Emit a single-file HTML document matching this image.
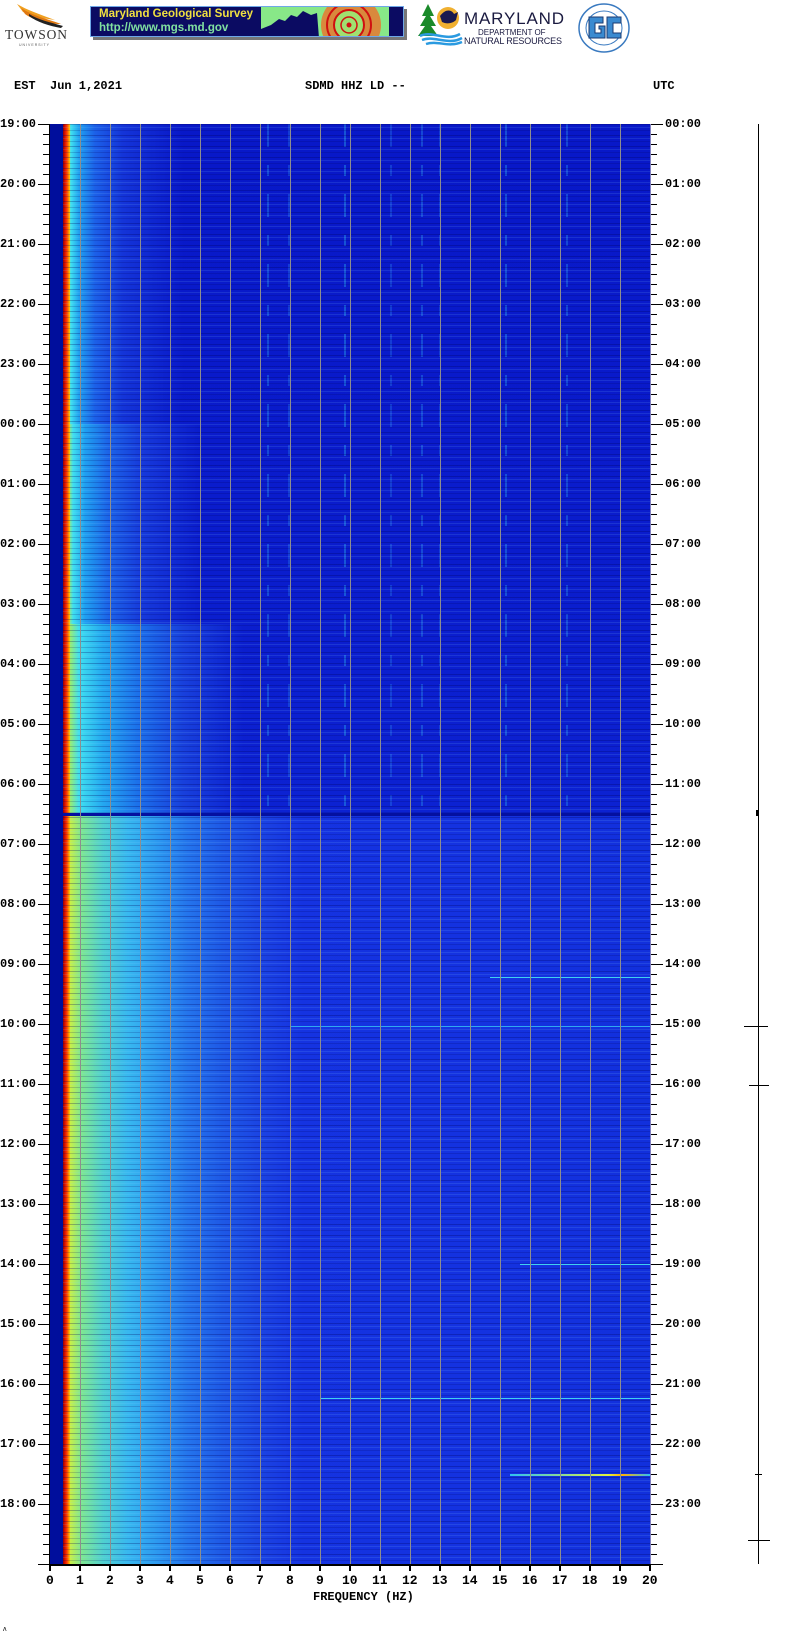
<!DOCTYPE html>
<html><head><meta charset="utf-8">
<style>
*{margin:0;padding:0;box-sizing:border-box}
body{width:802px;height:1644px;background:#fff;position:relative;overflow:hidden;font-family:"Liberation Mono",monospace}
.abs{position:absolute}
.lbl{position:absolute;font:bold 12px/12px "Liberation Mono",monospace;color:#000;letter-spacing:0}
#plot{position:absolute;left:50px;top:124px;width:600px;height:1440px;background:#0a18c8;overflow:hidden}
#plot div{position:absolute}
</style></head><body>

<svg class="abs" style="left:3px;top:2px" width="66" height="46" viewBox="0 0 66 46">
<path d="M14 2 C24 8 36 12 52 18 C38 16 28 14 20 10 Z" fill="#f0a020"/>
<path d="M18 6 C30 14 42 16 58 22 C44 22 30 18 22 12 Z" fill="#e07810"/>
<path d="M26 12 C36 18 46 20 60 24 L58 26 C46 24 34 20 26 14Z" fill="#222"/>
<text x="2" y="37" font-family="Liberation Serif,serif" font-size="13.5" fill="#333" textLength="62">TOWSON</text>
<text x="16" y="44" font-family="Liberation Sans,sans-serif" font-size="3.5" fill="#555" letter-spacing="1">UNIVERSITY</text>
</svg>

<div class="abs" style="left:93px;top:9px;width:314px;height:31px;background:#777"></div>
<div class="abs" style="left:90px;top:6px;width:314px;height:31px;background:#0b0b62;border:1px solid #6fa8e8;overflow:hidden">
 <div class="abs" style="left:8px;top:1px;font:bold 11.5px 'Liberation Sans',sans-serif;color:#f0e040">Maryland Geological Survey</div>
 <div class="abs" style="left:8px;top:15px;font:bold 11.5px 'Liberation Sans',sans-serif;color:#80e0a0">http://www.mgs.md.gov</div>
 <svg class="abs" style="left:170px;top:0" width="144" height="31" viewBox="0 0 144 31">
  <rect x="0" y="0" width="144" height="31" fill="#88e888"/>
  <path d="M0 22 L10 18 L18 12 L24 14 L30 8 L36 10 L42 4 L50 8 L56 6 L58 31 L0 31Z" fill="#0b0b62"/>
  <circle cx="90" cy="18" r="30" fill="#e87830" opacity=".85"/>
  <circle cx="88" cy="18" r="22" fill="none" stroke="#d01010" stroke-width="2"/>
  <circle cx="88" cy="18" r="15" fill="#a0e070" stroke="#d01010" stroke-width="2"/>
  <circle cx="88" cy="18" r="8" fill="none" stroke="#d01010" stroke-width="1.5"/>
  <circle cx="88" cy="18" r="2.5" fill="#d01010"/>
  <rect x="128" y="0" width="16" height="31" fill="#0b0b62"/>
 </svg>
</div>

<svg class="abs" style="left:418px;top:2px" width="150" height="44" viewBox="0 0 150 44">
<path d="M10 2 L16 14 L12 14 L18 24 L13 24 L20 34 L0 34 L7 24 L2 24 L8 14 L4 14Z" fill="#1a8a2a"/>
<circle cx="30" cy="16" r="11" fill="#f0b030"/>
<path d="M22 14 C28 6 34 8 36 12 L40 10 L38 18 C34 22 28 22 24 20Z" fill="#1a1a50"/>
<path d="M2 34 C14 28 28 40 42 32 M4 38 C16 33 30 44 44 36 M8 42 C20 38 30 46 44 40" stroke="#2a9ae0" stroke-width="2.5" fill="none"/>
<text x="46" y="22" font-family="Liberation Sans,sans-serif" font-size="17" fill="#1a1a40" textLength="100">MARYLAND</text>
<text x="60" y="33" font-family="Liberation Sans,sans-serif" font-size="8" fill="#1a1a40">DEPARTMENT OF</text>
<text x="46" y="42" font-family="Liberation Sans,sans-serif" font-size="9" fill="#1a1a40" textLength="98">NATURAL RESOURCES</text>
</svg>

<svg class="abs" style="left:577px;top:3px" width="54" height="50" viewBox="0 0 54 50">
<ellipse cx="27" cy="25" rx="25" ry="24" fill="#fff" stroke="#3a7ac0" stroke-width="1.5"/>
<ellipse cx="27" cy="25" rx="18" ry="17" fill="#fff" stroke="#3a7ac0" stroke-width="1"/>
<path d="M12 14 H26 V20 H18 V30 H24 V26 H22 V23 H28 V35 H12Z" fill="#3a8ad0" stroke="#1a3a70" stroke-width="1"/>
<path d="M30 14 H44 V20 H36 V30 H44 V35 H30Z" fill="#3a8ad0" stroke="#1a3a70" stroke-width="1"/>
</svg>

<div class="lbl" style="left:14px;top:80px">EST&nbsp;&nbsp;Jun 1,2021</div>
<div class="lbl" style="left:305px;top:80px">SDMD HHZ LD --</div>
<div class="lbl" style="left:653px;top:80px">UTC</div>

<div id="plot">
 <div style="left:0;top:0;width:600px;height:690px;background:linear-gradient(to bottom,#0818c8,#0a1ccc 60%,#0c22d2)"></div>
 <div style="left:0;top:690px;width:600px;height:750px;background:linear-gradient(to right,#1634e2 0,#1432e0 70%,#1230dc 100%)"></div>
 <!-- falloff with gradual widening via stacked bands -->
 <div style="left:13px;top:0;width:120px;height:300px;background:linear-gradient(to right,#ffe000 0,#c0f040 3px,#40e0f0 8px,#20a0f0 16px,#1c60e8 32px,#1434d8 60px,rgba(10,24,200,0) 120px)"></div>
 <div style="left:13px;top:300px;width:140px;height:200px;background:linear-gradient(to right,#ffe000 0,#c0f040 4px,#40e0f0 10px,#20a0f0 22px,#1c64e8 45px,#1638da 80px,rgba(10,26,202,0) 140px)"></div>
 <div style="left:13px;top:500px;width:180px;height:190px;background:linear-gradient(to right,#ffe000 0,#b0f050 5px,#40e0f0 16px,#24a8f0 40px,#1c70ea 75px,#1840dc 120px,rgba(10,28,205,0) 180px)"></div>
 <div style="left:13px;top:690px;width:240px;height:750px;background:linear-gradient(to right,#ffe000 0,#d0f040 6px,#80e890 18px,#50d0d0 40px,#38b8f0 65px,#2c98f0 95px,#2474ec 125px,#1e58e6 160px,#1a40e2 205px,rgba(22,52,226,0) 240px)"></div>
 <div style="left:0;top:0;width:13px;height:1440px;background:#000e9c"></div>
 <div style="left:13px;top:0;width:7px;height:1440px;background:linear-gradient(to right,#900000,#e01000 2px,#ff4000 4px,#ffa000 6px,#ffd000)"></div>
 <!-- faint broken vertical streaks upper area -->
 <div style="left:0;top:0;width:600px;height:688px;opacity:.35;-webkit-mask-image:repeating-linear-gradient(to bottom,#000 0 23px,transparent 23px 41px,#000 41px 52px,transparent 52px 70px);mask-image:repeating-linear-gradient(to bottom,#000 0 23px,transparent 23px 41px,#000 41px 52px,transparent 52px 70px);background:
  linear-gradient(to right,transparent 217px,#30a0f0 217px,#30a0f0 219px,transparent 219px),
  linear-gradient(to right,transparent 238px,#2a80ee 238px,#2a80ee 240px,transparent 240px),
  linear-gradient(to right,transparent 294px,#30c0f0 294px,#30c0f0 296px,transparent 296px),
  linear-gradient(to right,transparent 340px,#2a80ee 340px,#2a80ee 342px,transparent 342px),
  linear-gradient(to right,transparent 371px,#30a0f0 371px,#30a0f0 373px,transparent 373px),
  linear-gradient(to right,transparent 389px,#2a80ee 389px,#2a80ee 391px,transparent 391px),
  linear-gradient(to right,transparent 455px,#30b0f0 455px,#30b0f0 457px,transparent 457px),
  linear-gradient(to right,transparent 516px,#30a0f0 516px,#30a0f0 518px,transparent 518px)"></div>
 <div style="left:13px;top:0;width:587px;height:1440px;background:repeating-linear-gradient(to bottom,rgba(0,0,90,.28) 0 1px,transparent 1px 3px,rgba(140,210,255,.13) 3px 4px,transparent 4px 6px,rgba(0,0,90,.18) 6px 7px,transparent 7px 11px)"></div>
 <div style="left:13px;top:689px;width:587px;height:3px;background:#0410a0"></div>
 <div style="left:270px;top:1274px;width:330px;height:1px;background:#40d0f0"></div>
 <div style="left:460px;top:1350px;width:140px;height:2px;background:linear-gradient(to right,#30c0f0,#e0f040 70%,#ffb000 80%,#30c0f0)"></div>
 <div style="left:440px;top:853px;width:160px;height:1px;background:#40d0f0"></div>
 <div style="left:240px;top:902px;width:360px;height:1px;background:#30a8f0"></div>
 <div style="left:470px;top:1140px;width:130px;height:1px;background:#40d0f0"></div>
 <!-- grid lines -->
 <div style="left:30px;top:0;width:570px;height:1440px;background:repeating-linear-gradient(to right,#8e8e8e 0 1px,transparent 1px 30px)"></div>
</div>
<div class="abs" style="left:49px;top:124px;width:1px;height:1442px;background:#000"></div>
<div class="abs" style="left:650px;top:124px;width:1px;height:1442px;background:#8080c0"></div>
<div class="abs" style="left:49px;top:1564px;width:602px;height:2px;background:#000"></div>

<div class="abs" style="left:43px;top:124px;width:7px;height:1441px;background:repeating-linear-gradient(to bottom,#000 0 1px,transparent 1px 10px)"></div>
<div class="abs" style="left:38px;top:124px;width:12px;height:1441px;background:repeating-linear-gradient(to bottom,#000 0 1px,transparent 1px 60px)"></div>
<div class="abs" style="left:651px;top:124px;width:6px;height:1441px;background:repeating-linear-gradient(to bottom,#000 0 1px,transparent 1px 10px)"></div>
<div class="abs" style="left:651px;top:124px;width:12px;height:1441px;background:repeating-linear-gradient(to bottom,#000 0 1px,transparent 1px 60px)"></div>
<div class="abs" style="left:49px;top:1566px;width:603px;height:5px;background:repeating-linear-gradient(to right,#000 0 2px,transparent 2px 30px)"></div>

<div class="lbl" style="left:0;top:118px">19:00</div>
<div class="lbl" style="left:0;top:178px">20:00</div>
<div class="lbl" style="left:0;top:238px">21:00</div>
<div class="lbl" style="left:0;top:298px">22:00</div>
<div class="lbl" style="left:0;top:358px">23:00</div>
<div class="lbl" style="left:0;top:418px">00:00</div>
<div class="lbl" style="left:0;top:478px">01:00</div>
<div class="lbl" style="left:0;top:538px">02:00</div>
<div class="lbl" style="left:0;top:598px">03:00</div>
<div class="lbl" style="left:0;top:658px">04:00</div>
<div class="lbl" style="left:0;top:718px">05:00</div>
<div class="lbl" style="left:0;top:778px">06:00</div>
<div class="lbl" style="left:0;top:838px">07:00</div>
<div class="lbl" style="left:0;top:898px">08:00</div>
<div class="lbl" style="left:0;top:958px">09:00</div>
<div class="lbl" style="left:0;top:1018px">10:00</div>
<div class="lbl" style="left:0;top:1078px">11:00</div>
<div class="lbl" style="left:0;top:1138px">12:00</div>
<div class="lbl" style="left:0;top:1198px">13:00</div>
<div class="lbl" style="left:0;top:1258px">14:00</div>
<div class="lbl" style="left:0;top:1318px">15:00</div>
<div class="lbl" style="left:0;top:1378px">16:00</div>
<div class="lbl" style="left:0;top:1438px">17:00</div>
<div class="lbl" style="left:0;top:1498px">18:00</div>
<div class="lbl" style="left:665px;top:118px">00:00</div>
<div class="lbl" style="left:665px;top:178px">01:00</div>
<div class="lbl" style="left:665px;top:238px">02:00</div>
<div class="lbl" style="left:665px;top:298px">03:00</div>
<div class="lbl" style="left:665px;top:358px">04:00</div>
<div class="lbl" style="left:665px;top:418px">05:00</div>
<div class="lbl" style="left:665px;top:478px">06:00</div>
<div class="lbl" style="left:665px;top:538px">07:00</div>
<div class="lbl" style="left:665px;top:598px">08:00</div>
<div class="lbl" style="left:665px;top:658px">09:00</div>
<div class="lbl" style="left:665px;top:718px">10:00</div>
<div class="lbl" style="left:665px;top:778px">11:00</div>
<div class="lbl" style="left:665px;top:838px">12:00</div>
<div class="lbl" style="left:665px;top:898px">13:00</div>
<div class="lbl" style="left:665px;top:958px">14:00</div>
<div class="lbl" style="left:665px;top:1018px">15:00</div>
<div class="lbl" style="left:665px;top:1078px">16:00</div>
<div class="lbl" style="left:665px;top:1138px">17:00</div>
<div class="lbl" style="left:665px;top:1198px">18:00</div>
<div class="lbl" style="left:665px;top:1258px">19:00</div>
<div class="lbl" style="left:665px;top:1318px">20:00</div>
<div class="lbl" style="left:665px;top:1378px">21:00</div>
<div class="lbl" style="left:665px;top:1438px">22:00</div>
<div class="lbl" style="left:665px;top:1498px">23:00</div>

<div class="abs" style="left:0;top:1573px;width:802px;height:16px;font:bold 13px/16px 'Liberation Mono',monospace">
<span class="abs" style="left:46px">0</span><span class="abs" style="left:76px">1</span><span class="abs" style="left:106px">2</span><span class="abs" style="left:136px">3</span><span class="abs" style="left:166px">4</span><span class="abs" style="left:196px">5</span><span class="abs" style="left:226px">6</span><span class="abs" style="left:256px">7</span><span class="abs" style="left:286px">8</span><span class="abs" style="left:316px">9</span><span class="abs" style="left:342px">10</span><span class="abs" style="left:372px">11</span><span class="abs" style="left:402px">12</span><span class="abs" style="left:432px">13</span><span class="abs" style="left:462px">14</span><span class="abs" style="left:492px">15</span><span class="abs" style="left:522px">16</span><span class="abs" style="left:552px">17</span><span class="abs" style="left:582px">18</span><span class="abs" style="left:612px">19</span><span class="abs" style="left:642px">20</span>
</div>
<div class="lbl" style="left:313px;top:1591px">FREQUENCY (HZ)</div>

<div class="abs" style="left:758px;top:124px;width:1px;height:1440px;background:#000"></div>
<div class="abs" style="left:756px;top:810px;width:3px;height:6px;background:#000"></div>
<div class="abs" style="left:744px;top:1026px;width:24px;height:1px;background:#000"></div>
<div class="abs" style="left:749px;top:1085px;width:20px;height:1px;background:#000"></div>
<div class="abs" style="left:755px;top:1474px;width:7px;height:1px;background:#000"></div>
<div class="abs" style="left:748px;top:1540px;width:22px;height:1px;background:#000"></div>
<div class="abs" style="left:3px;top:1626px;font:7px 'Liberation Sans',sans-serif">ᴧ</div>
</body></html>
